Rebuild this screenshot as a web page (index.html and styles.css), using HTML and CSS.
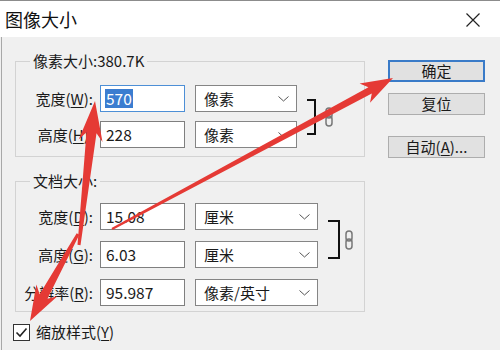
FILE: index.html
```html
<!DOCTYPE html>
<html>
<head>
<meta charset="utf-8">
<link rel="stylesheet" href="styles.css">
</head>
<body>
<div class="window">
  <div class="titlebar">
    <span class="title">图像大小</span>
    <svg class="close" width="16" height="14" viewBox="0 0 16 14"><path d="M1.5 0.5L14.5 13.5M14.5 0.5L1.5 13.5" stroke="#222" stroke-width="1.2" fill="none"/></svg>
  </div>
  <div class="body">
    <div class="main">
      <div class="group g1">
        <div class="legend">像素大小:380.7K</div>
        <div class="rows">
          <div class="fields">
            <div class="row">
              <span class="label"><span>宽度(<u>W</u>):</span></span>
              <span class="input focus"><span class="sel">570</span></span>
              <span class="select">像素<svg class="chev" width="11" height="6" viewBox="0 0 11 6"><path d="M0.5 0.5L5.5 5L10.5 0.5" stroke="#555" fill="none"/></svg></span>
            </div>
            <div class="row">
              <span class="label"><span>高度(<u>H</u>):</span></span>
              <span class="input">228</span>
              <span class="select">像素<svg class="chev" width="11" height="6" viewBox="0 0 11 6"><path d="M0.5 0.5L5.5 5L10.5 0.5" stroke="#555" fill="none"/></svg></span>
            </div>
          </div>
          <div class="link">
            <span class="bracket"></span>
            <svg class="chain" width="8" height="20" viewBox="0 0 8 20"><rect x="1" y="1" width="6" height="10" rx="3" stroke="#777" stroke-width="1.5" fill="none"/><rect x="1" y="9" width="6" height="10" rx="3" stroke="#777" stroke-width="1.5" fill="none"/></svg>
          </div>
        </div>
      </div>
      <div class="group g2">
        <div class="legend">文档大小:</div>
        <div class="rows">
          <div class="fields">
            <div class="row">
              <span class="label"><span>宽度(<u>D</u>):</span></span>
              <span class="input">15.08</span>
              <span class="select">厘米<svg class="chev" width="11" height="6" viewBox="0 0 11 6"><path d="M0.5 0.5L5.5 5L10.5 0.5" stroke="#555" fill="none"/></svg></span>
            </div>
            <div class="row">
              <span class="label"><span>高度(<u>G</u>):</span></span>
              <span class="input">6.03</span>
              <span class="select">厘米<svg class="chev" width="11" height="6" viewBox="0 0 11 6"><path d="M0.5 0.5L5.5 5L10.5 0.5" stroke="#555" fill="none"/></svg></span>
            </div>
            <div class="row">
              <span class="label"><span>分辨率(<u>R</u>):</span></span>
              <span class="input">95.987</span>
              <span class="select">像素/英寸<svg class="chev" width="11" height="6" viewBox="0 0 11 6"><path d="M0.5 0.5L5.5 5L10.5 0.5" stroke="#555" fill="none"/></svg></span>
            </div>
          </div>
          <div class="link">
            <span class="bracket"></span>
            <svg class="chain" width="8" height="20" viewBox="0 0 8 20"><rect x="1" y="1" width="6" height="10" rx="3" stroke="#777" stroke-width="1.5" fill="none"/><rect x="1" y="9" width="6" height="10" rx="3" stroke="#777" stroke-width="1.5" fill="none"/></svg>
          </div>
        </div>
      </div>
      <div class="checks">
        <div class="check">
          <span class="box"><svg width="15" height="15" viewBox="0 0 15 15"><path d="M2.5 7.5L6 11L12.5 3.5" stroke="#222" stroke-width="1.6" fill="none"/></svg></span>
          <span class="ctext">缩放样式(<u>Y</u>)</span>
        </div>
        <div class="check">
          <span class="box"></span>
        </div>
      </div>
    </div>
    <div class="buttons">
      <div class="btn default">确定</div>
      <div class="btn reset">复位</div>
      <div class="btn auto">自动(<u>A</u>)...</div>
    </div>
  </div>
  <svg class="arrows" width="500" height="350" viewBox="0 0 500 350">
    <polygon fill="#e53a35" points="95,101 102.5,142.1 96.5,133.3 80.5,245.2 77.5,244.8 86.5,132.3 78.7,139.5"/>
    <polygon fill="#e53a35" points="30,321 36.4,284.6 39.6,294.3 76.7,233.3 79.3,234.7 47.4,298.7 57.4,296.2"/>
    <polygon fill="#e53a35" points="393,78 359.6,83.4 368.4,87.2 111.5,228.1 112.5,229.9 371.8,93.4 370,102.8"/>
  </svg>
</div>
</body>
</html>
```

FILE: styles.css
```css
* { box-sizing: border-box; }
html, body { margin: 0; padding: 0; }
body {
  width: 500px;
  height: 350px;
  overflow: hidden;
  font-family: "Noto Sans CJK SC", "Noto Sans", sans-serif;
  color: #1a1a1a;
  background: #f0f0f0;
}
.window {
  position: relative;
  width: 500px;
  height: 350px;
  overflow: hidden;
  background: #f0f0f0;
}
.titlebar {
  height: 37px;
  background: #ffffff;
  border-top: 1px solid #8c8c8c;
  display: flex;
  align-items: center;
  justify-content: space-between;
  padding: 0 19px 0 5px;
}
.title {
  font-size: 18px;
  line-height: 22px;
  color: #111;
}
.close { display: block; margin-top: 2px; }
.body {
  display: flex;
  margin-left: 1px;
  border-left: 1px solid #a8a8a8;
  padding-left: 13px;
  height: 313px;
}
.main {
  width: 350px;
  padding-top: 24px;
}
.group {
  border: 1px solid #d3d3d3;
  padding: 0 0 0 17px;
}
.g1 { padding-bottom: 8px; }
.g2 { margin-top: 24px; padding-bottom: 5px; }
.legend {
  width: max-content;
  margin: -11px 0 0 -3px;
  padding: 0 3px;
  height: 20px;
  line-height: 20px;
  font-size: 15px;
  background: #f0f0f0;
}
.rows {
  display: flex;
  align-items: flex-start;
}
.g1 .rows { margin-top: 14px; }
.g2 .rows { margin-top: 12px; }
.fields {
  display: flex;
  flex-direction: column;
}
.g1 .fields { gap: 9px; }
.g2 .fields { gap: 11px; }
.row {
  display: flex;
  align-items: center;
  height: 27px;
}
.label {
  width: 67px;
  flex: none;
  display: flex;
  justify-content: flex-end;
  padding-right: 7px;
  font-size: 15px;
  line-height: 20px;
  white-space: nowrap;
}
.label > span { flex: none; }
u { text-decoration-thickness: 1px; text-underline-offset: 2px; }
.input {
  width: 85px;
  height: 27px;
  border: 1px solid #7f7f7f;
  background: #fff;
  padding-left: 5px;
  font-size: 15.5px;
  line-height: 25px;
}
.input.focus { border-color: #4d8fd6; }
.sel {
  display: inline-block;
  background: #3b7dd0;
  color: #fff;
  line-height: 19px;
  padding: 0 1px;
  margin-left: -1px;
}
.select {
  margin-left: 10px;
  height: 27px;
  border: 1px solid #858585;
  background: #fff;
  font-size: 15px;
  line-height: 25px;
  padding: 0 7px 0 8px;
  display: flex;
  align-items: center;
  justify-content: space-between;
}
.g1 .select { width: 102px; }
.g2 .select { width: 123px; }
.chev { display: block; }
.link {
  display: flex;
  align-items: center;
}
.g1 .link { margin: 14px 0 0 10px; }
.g2 .link { margin: 17px 0 0 10px; }
.bracket {
  display: block;
  border: 2px solid #111;
  border-left: none;
}
.g1 .bracket { width: 9px; height: 36px; }
.g2 .bracket { width: 12px; height: 39px; }
.chain { display: block; }
.g1 .chain { margin-left: 9px; }
.g2 .chain { margin-left: 5px; }
.checks {
  margin: 10px 0 0 -2px;
  display: flex;
  flex-direction: column;
  gap: 6px;
}
.check {
  display: flex;
  align-items: center;
  height: 20px;
}
.box {
  width: 17px;
  height: 17px;
  border: 1px solid #333;
  background: #fff;
  display: flex;
  align-items: center;
  justify-content: center;
}
.ctext {
  margin-left: 6px;
  font-size: 15px;
  line-height: 20px;
}
.buttons {
  margin-left: 23px;
  width: 97px;
  padding-top: 23px;
  display: flex;
  flex-direction: column;
}
.btn {
  height: 22px;
  border: 1px solid #adadad;
  background: #e1e1e1;
  font-size: 15px;
  line-height: 20px;
  text-align: center;
}
.btn.default { border: 2px solid #3a7bc8; line-height: 18px; }
.btn.reset { margin-top: 11px; }
.btn.auto { margin-top: 21px; }
.arrows {
  position: absolute;
  top: 0;
  left: 0;
  pointer-events: none;
}
```
